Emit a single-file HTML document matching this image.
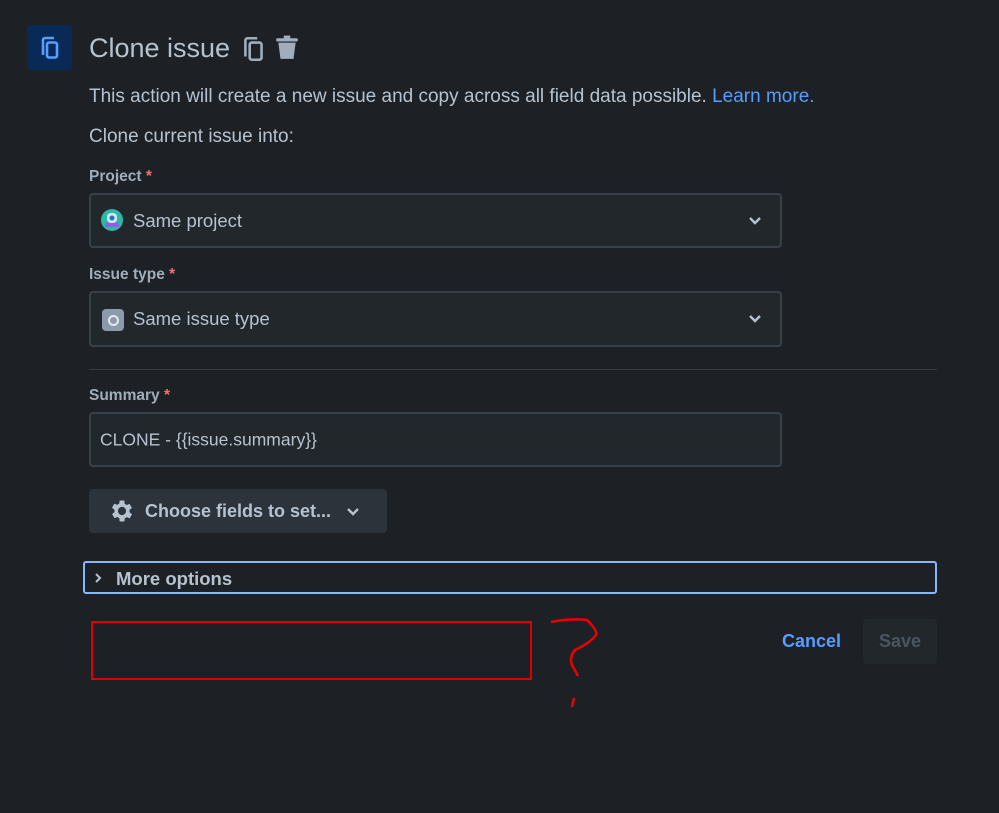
<!DOCTYPE html>
<html><head><style>
body{margin:0;width:999px;height:813px;background:#1d2125;font-family:"Liberation Sans",sans-serif;color:#b6c2cf;position:relative;overflow:hidden}
.a{position:absolute}
.lbl{font-size:15.5px;font-weight:bold;color:#9fadbc}
.lbl span{color:#f87168}
.inp{position:absolute;left:89px;width:693px;background:#22272b;border:2px solid #38414a;border-radius:4px;box-sizing:border-box}
.inp .t{position:absolute;left:42px;top:50%;transform:translateY(-50%);font-size:18.5px;color:#b6c2cf}
.chev{position:absolute;right:18px;top:50%;transform:translateY(-50%)}
</style></head><body>
<div class="a" style="left:27px;top:25px;width:45px;height:45px;background:#092957;border-radius:4px"></div>
<svg class="a" style="left:38px;top:35px" width="24" height="26" viewBox="0 0 24 26"><path d="M5 20V5a2 2 0 0 1 2-2h9" stroke="#579dff" stroke-width="2.6" fill="none"/><rect x="9" y="7.5" width="10" height="15" rx="2" stroke="#579dff" stroke-width="2.6" fill="none"/></svg>
<div class="a" style="left:89px;top:33px;font-size:27px;color:#b6c2cf">Clone issue</div>
<svg class="a" style="left:242px;top:35px" width="24" height="28" viewBox="0 0 22 26"><path d="M3 20V5a2 2 0 0 1 2-2h9" stroke="#9fadbc" stroke-width="2.4" fill="none"/><rect x="7" y="7" width="11" height="16" rx="2" stroke="#9fadbc" stroke-width="2.4" fill="none"/></svg>
<svg class="a" style="left:275px;top:35px" width="24" height="26" viewBox="0 0 22 24"><rect x="1" y="3" width="20" height="3" rx="1" fill="#9fadbc"/><rect x="8" y="0.5" width="6" height="3" fill="#9fadbc"/><path d="M3 7h16l-2 15H5z" fill="#9fadbc"/></svg>
<div class="a" style="left:89px;top:86px;font-size:19px">This action will create a new issue and copy across all field data possible. <span style="color:#579dff">Learn more.</span></div>
<div class="a" style="left:89px;top:126px;font-size:19px">Clone current issue into:</div>
<div class="a lbl" style="left:89px;top:168px">Project <span>*</span></div>
<div class="inp" style="top:193px;height:55px">
<svg class="a" style="left:10px;top:14px" width="22" height="22" viewBox="0 0 22 22"><circle cx="11" cy="11" r="11" fill="#2fb8a6"/><path d="M4 15q7-5 14 0v3H4z" fill="#8f5fe8"/><rect x="6" y="4" width="10" height="10" rx="4" fill="#cfe8f5"/><circle cx="11" cy="9" r="2.5" fill="#2a6fb8"/></svg>
<div class="t">Same project</div>
<svg class="chev" width="14" height="10"><path d="M2 2l5 5 5-5" stroke="#b6c2cf" stroke-width="2.4" fill="none"/></svg></div>
<div class="a lbl" style="left:89px;top:266px">Issue type <span>*</span></div>
<div class="inp" style="top:291px;height:56px">
<div class="a" style="left:11px;top:16px;width:22px;height:22px;background:#8c9bab;border-radius:4px"></div>
<div class="a" style="left:17px;top:22px;width:7px;height:7px;border:2px solid #e6e9ec;border-radius:50%"></div>
<div class="t">Same issue type</div>
<svg class="chev" width="14" height="10"><path d="M2 2l5 5 5-5" stroke="#b6c2cf" stroke-width="2.4" fill="none"/></svg></div>
<div class="a" style="left:89px;top:369px;width:848px;height:1px;background:#333a42"></div>
<div class="a lbl" style="left:89px;top:387px">Summary <span>*</span></div>
<div class="inp" style="top:412px;height:55px"><div class="t" style="left:9px;font-size:17.5px">CLONE - {{issue.summary}}</div></div>
<div class="a" style="left:89px;top:489px;width:298px;height:44px;background:#2c333a;border-radius:4px"></div>
<svg class="a" style="left:108px;top:497px" width="28" height="28" viewBox="0 0 24 24"><path fill="#b6c2cf" d="M19.4 13a7.5 7.5 0 0 0 0-2l2.1-1.6-2-3.5-2.5 1a7 7 0 0 0-1.7-1L15 3h-4l-.4 2.7a7 7 0 0 0-1.7 1l-2.5-1-2 3.5L6.6 11a7.5 7.5 0 0 0 0 2l-2.1 1.6 2 3.5 2.5-1a7 7 0 0 0 1.7 1L11 21h4l.4-2.7a7 7 0 0 0 1.7-1l2.5 1 2-3.5zM13 15.5a3.5 3.5 0 1 1 0-7 3.5 3.5 0 0 1 0 7z" transform="translate(-1 0)"/></svg>
<div class="a" style="left:145px;top:501px;font-size:18px;font-weight:bold">Choose fields to set...</div>
<svg class="a" style="left:346px;top:507px" width="14" height="10"><path d="M2 2l5 5 5-5" stroke="#b6c2cf" stroke-width="2.4" fill="none"/></svg>
<div class="a" style="left:83px;top:561px;width:854px;height:33px;border:2px solid #85b8ff;border-radius:3px;box-sizing:border-box"></div>
<svg class="a" style="left:94px;top:572px" width="8" height="12"><path d="M2 2l4 4-4 4" stroke="#b6c2cf" stroke-width="2" fill="none"/></svg>
<div class="a" style="left:116px;top:568px;font-size:18.5px;font-weight:bold">More options</div>
<div class="a" style="left:91px;top:621px;width:441px;height:59px;border:2px solid #d00;box-sizing:border-box"></div>
<svg class="a" style="left:545px;top:615px" width="60" height="100"><path d="M6 7Q25 3 42 5Q53 16 51 20Q45 28 30 35Q24 42 27 50L33 61M29 83L27 92" stroke="#e00" stroke-width="2.5" fill="none"/></svg>
<div class="a" style="left:782px;top:631px;font-size:18px;font-weight:bold;color:#579dff">Cancel</div>
<div class="a" style="left:863px;top:619px;width:74px;height:45px;background:#22272b;border-radius:4px"></div>
<div class="a" style="left:879px;top:631px;font-size:18px;font-weight:bold;color:#4b5561">Save</div>
</body></html>
